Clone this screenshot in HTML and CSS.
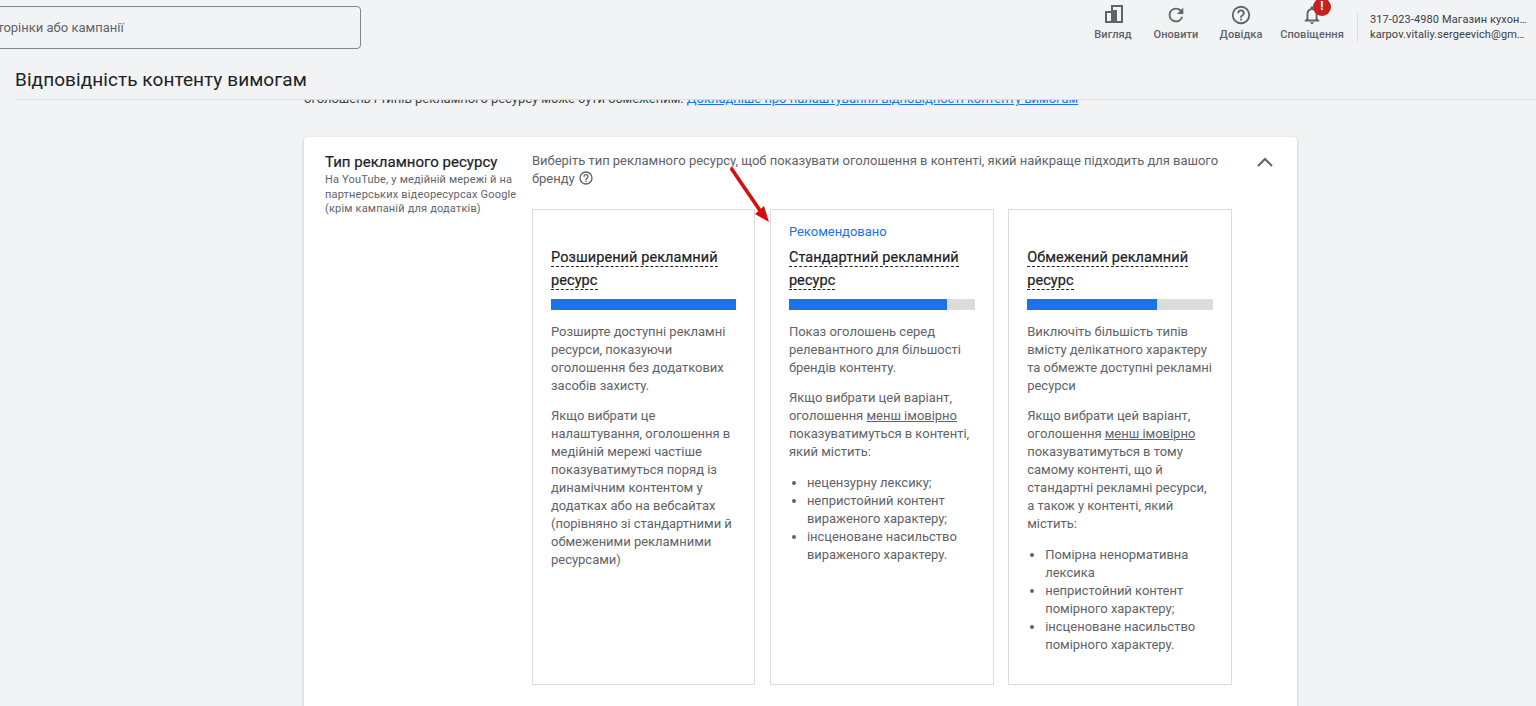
FILE: index.html
```html
<!DOCTYPE html>
<html lang="uk">
<head>
<meta charset="utf-8">
<title>Відповідність контенту вимогам</title>
<link rel="stylesheet" href="styles.css">
</head>
<body>
<div class="app">
  <header class="topbar">
    <div class="search">Пошук сторінки або кампанії</div>
    <nav class="tools">
      <div class="tool tool-view">
        <svg class="tool-icon icon-view" viewBox="0 0 24 24"><path fill="#5f6368" fill-rule="evenodd" d="M10 2h12v18H4V8h6zM6 10v8h4v-8zM12 4v3h4V4zM16 4v14h4V4z"/></svg>
        <span>Вигляд</span>
      </div>
      <div class="tool tool-refresh">
        <svg class="tool-icon" viewBox="0 0 24 24"><path fill="#5f6368" d="M17.65 6.35A7.96 7.96 0 0 0 12 4a8 8 0 1 0 7.73 10h-2.08A6 6 0 1 1 12 6c1.66 0 3.14.69 4.22 1.78L13 11h7V4z"/></svg>
        <span>Оновити</span>
      </div>
      <div class="tool tool-help">
        <svg class="tool-icon" viewBox="0 0 24 24"><path fill="#5f6368" d="M11 18h2v-2h-2zm1-16a10 10 0 1 0 0 20 10 10 0 0 0 0-20zm0 18a8 8 0 1 1 0-16 8 8 0 0 1 0 16zm0-14a4 4 0 0 0-4 4h2a2 2 0 1 1 4 0c0 2-3 1.75-3 5h2c0-2.25 3-2.5 3-5a4 4 0 0 0-4-4z"/></svg>
        <span>Довідка</span>
      </div>
      <div class="tool tool-bell">
        <svg class="tool-icon" viewBox="0 0 24 24"><path fill="#5f6368" d="M12 22a2 2 0 0 0 2-2h-4a2 2 0 0 0 2 2zm6-6v-5c0-3.07-1.64-5.64-4.5-6.32V4a1.5 1.5 0 0 0-3 0v.68C7.63 5.36 6 7.92 6 11v5l-2 2v1h16v-1zm-2 1H8v-6c0-2.48 1.51-4.5 4-4.5s4 2.02 4 4.5z"/></svg>
        <b class="badge">!</b>
        <span>Сповіщення</span>
      </div>
      <div class="account">
        <div class="account-line">317-023-4980 Магазин кухонних меблів</div>
        <div class="account-line">karpov.vitaliy.sergeevich@gmail.com</div>
      </div>
    </nav>
  </header>

  <div class="titlebar"><h1>Відповідність контенту вимогам</h1></div>

  <main class="scroll">
    <p class="intro">оголошень і типів рекламного ресурсу може бути обмеженим. <a href="#">Докладніше про налаштування відповідності контенту вимогам</a></p>

    <section class="panel">
      <div class="panel-side">
        <h2>Тип рекламного ресурсу</h2>
        <p>На YouTube, у медійній мережі й на партнерських відеоресурсах Google (крім кампаній для додатків)</p>
      </div>
      <div class="panel-body">
        <p class="lead">Виберіть тип рекламного ресурсу, щоб показувати оголошення в контенті, який найкраще підходить для вашого бренду
          <svg class="hint" viewBox="0 0 24 24"><path fill="#5f6368" d="M11 18h2v-2h-2zm1-16a10 10 0 1 0 0 20 10 10 0 0 0 0-20zm0 18a8 8 0 1 1 0-16 8 8 0 0 1 0 16zm0-14a4 4 0 0 0-4 4h2a2 2 0 1 1 4 0c0 2-3 1.75-3 5h2c0-2.25 3-2.5 3-5a4 4 0 0 0-4-4z"/></svg>
        </p>
        <div class="options">
          <article class="option">
            <div class="tag"></div>
            <h3><span>Розширений рекламний ресурс</span></h3>
            <div class="meter"><i class="fill fill-full"></i></div>
            <p>Розширте доступні рекламні ресурси, показуючи оголошення без додаткових засобів захисту.</p>
            <p>Якщо вибрати це налаштування, оголошення в медійній мережі частіше показуватимуться поряд із динамічним контентом у додатках або на вебсайтах (порівняно зі стандартними й обмеженими рекламними ресурсами)</p>
          </article>
          <article class="option">
            <div class="tag">Рекомендовано</div>
            <h3><span>Стандартний рекламний ресурс</span></h3>
            <div class="meter"><i class="fill fill-std"></i></div>
            <p>Показ оголошень серед релевантного для більшості брендів контенту.</p>
            <p>Якщо вибрати цей варіант, оголошення <u>менш імовірно</u> показуватимуться в контенті, який містить:</p>
            <ul>
              <li>нецензурну лексику;</li>
              <li>непристойний контент вираженого характеру;</li>
              <li>інсценоване насильство вираженого характеру.</li>
            </ul>
          </article>
          <article class="option">
            <div class="tag"></div>
            <h3><span>Обмежений рекламний ресурс</span></h3>
            <div class="meter"><i class="fill fill-lim"></i></div>
            <p>Виключіть більшість типів вмісту делікатного характеру та обмежте доступні рекламні ресурси</p>
            <p>Якщо вибрати цей варіант, оголошення <u>менш імовірно</u> показуватимуться в тому самому контенті, що й стандартні рекламні ресурси, а також у контенті, який містить:</p>
            <ul>
              <li>Помірна ненормативна лексика</li>
              <li>непристойний контент помірного характеру;</li>
              <li>інсценоване насильство помірного характеру.</li>
            </ul>
          </article>
        </div>
      </div>
      <svg class="chevron" viewBox="0 0 24 24"><path fill="none" stroke="#5f6368" stroke-width="2" d="M5 16l7-7 7 7"/></svg>
    </section>
  </main>

  <svg class="arrow" viewBox="0 0 50 70"><path stroke="#d50f0f" stroke-width="3.6" fill="none" d="M3 3L33 47"/><path fill="#d50f0f" d="M41 57L27 49L36 41Z"/></svg>
</div>
</body>
</html>
```
FILE: styles.css
```css
* { box-sizing: border-box; }
html, body { margin: 0; height: 100%; }
body { background: #f1f3f4; font-family: Roboto, "Noto Sans", sans-serif; color: #3c4043; overflow: hidden; }
.app { position: relative; height: 706px; display: flex; flex-direction: column; overflow: hidden; }

.topbar { height: 60px; flex: none; display: flex; justify-content: space-between; align-items: flex-start; }
.search { width: 428px; height: 43px; margin: 6px 0 0 -67px; padding-left: 13px; border: 1px solid #80868b; border-radius: 4px; font-size: 13px; line-height: 41px; color: #5f6368; white-space: nowrap; }
.tools { display: flex; align-items: flex-start; }
.tool { position: relative; display: flex; flex-direction: column; align-items: center; font-size: 11px; font-weight: 500; color: #5f6368; padding-top: 3px; letter-spacing: .08px; }
.tool span { margin-top: 1px; line-height: 14px; white-space: nowrap; }
.tool-icon { width: 22px; height: 22px; margin: 1px 0; display: block; }
.icon-view { width: 24px; height: 24px; margin: 0; }
.tool-view { width: 62px; }
.tool-refresh { width: 64px; }
.tool-help { width: 66px; }
.tool-bell { width: 76px; }
.badge { position: absolute; top: -2px; left: 39px; width: 18px; height: 18px; border-radius: 50%; background: #c5221f; color: #fff; font-size: 12px; line-height: 17px; text-align: center; }
.account { width: 179px; margin: 13px 0 0 7px; padding-left: 12px; height: 29px; border-left: 1px solid #dadce0; font-size: 11px; line-height: 14.5px; color: #3c4043; }
.account-line { width: 158px; overflow: hidden; white-space: nowrap; text-overflow: ellipsis; letter-spacing: .1px; }

.titlebar { height: 40px; flex: none; margin-left: 15px; border-bottom: 1px solid #dadce0; position: relative; z-index: 1; background: #f1f3f4; }
.titlebar h1 { margin: 8px 0 0; font-size: 19px; font-weight: 400; line-height: 24px; color: #202124; letter-spacing: .07px; }

.scroll { flex: 1; min-height: 0; overflow: hidden; padding: 0 239px 0 304px; }
.intro { margin: -10px 0 0; font-size: 13px; line-height: 18px; color: #3c4043; white-space: nowrap; letter-spacing: -.035px; }
.intro a { color: #1a73e8; }

.panel { position: relative; display: flex; margin-top: 29px; padding: 15px 0 40px 21px; background: #fff; border-radius: 4px 4px 0 0; box-shadow: 0 1px 3px rgba(60,64,67,.3); height: 640px; }
.panel-side { width: 207px; flex: none; }
.panel-side h2 { margin: 0; font-size: 15px; font-weight: 400; line-height: 20px; color: #202124; letter-spacing: .02px; -webkit-text-stroke: .2px #202124; }
.panel-side p { margin: 1px 0 0; width: 196px; font-size: 11px; line-height: 14.5px; color: #5f6368; letter-spacing: .18px; }
.panel-body { width: 700px; flex: none; }
.lead { margin: 0; width: 700px; font-size: 13px; line-height: 18px; color: #5f6368; letter-spacing: -.025px; }
.hint { width: 16px; height: 16px; vertical-align: -3px; }
.chevron { position: absolute; top: 13px; left: 949px; width: 24px; height: 24px; }

.options { display: grid; grid-template-columns: 223.4px 223.8px 224px; column-gap: 14.5px; margin-top: 21px; }
.option { height: 476px; border: 1px solid #dadce0; padding: 13px 18px 0; font-size: 13px; line-height: 18px; color: #5f6368; letter-spacing: -.02px; }
.tag { height: 18px; color: #1a73e8; font-size: 13px; line-height: 18px; letter-spacing: -.02px; }
.option h3 { margin: 6px 0 7px; font-size: 14.5px; font-weight: 400; line-height: 22.5px; color: #202124; letter-spacing: .08px; -webkit-text-stroke: .2px #202124; }
.option h3 span { border-bottom: 1px dashed #202124; }
.meter { height: 11px; background: #dadce0; margin-bottom: 13px; }
.fill { display: block; height: 100%; background: #1a73e8; }
.fill-full { width: 100%; }
.fill-std { width: 85%; }
.fill-lim { width: 70%; }
.option p { margin: 0 0 12px; }
.option ul { margin: 13px 0 0; padding-left: 18px; }
.option li::marker { color: #5f6368; }

.arrow { position: absolute; left: 728px; top: 165px; width: 50px; height: 70px; }
```
